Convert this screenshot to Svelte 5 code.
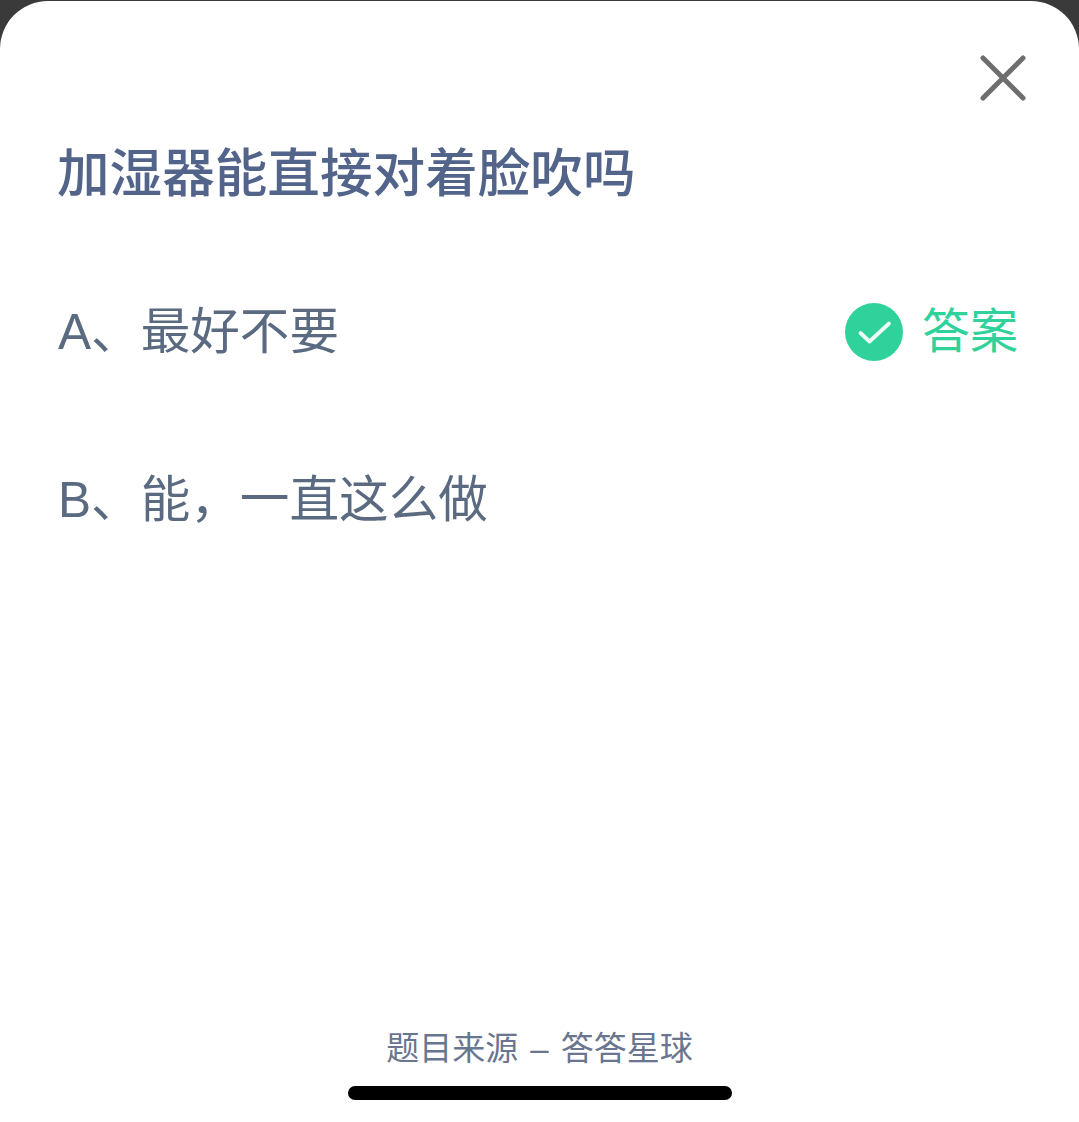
<script>
  const title = "加湿器能直接对着脸吹吗";
  const options = [
    { id: "a", text: "A、最好不要", answer: true },
    { id: "b", text: "B、能，一直这么做", answer: false }
  ];
</script>

<main class="page">
  <div class="sheet">
    <div class="top">
      <svg class="close" width="46" height="46" viewBox="0 0 46 46" aria-label="关闭">
        <path d="M3 3 L43 43 M43 3 L3 43" stroke="#6e6e6e" stroke-width="5" stroke-linecap="round" fill="none" />
      </svg>
    </div>

    <h1>{title}</h1>

    <ul class="options">
      {#each options as opt (opt.id)}
        <li class="option">
          <span class="label">{opt.text}</span>
          {#if opt.answer}
            <span class="answer">
              <svg width="58" height="58" viewBox="0 0 58 58">
                <circle cx="29" cy="29" r="29" fill="#2fd29a" />
                <path d="M15.5 30 L24.5 38.5 L44 20.5" stroke="#fff" stroke-opacity="0.92" stroke-width="3.8" stroke-linecap="round" stroke-linejoin="round" fill="none" />
              </svg>
              <span class="answer-text">答案</span>
            </span>
          {/if}
        </li>
      {/each}
    </ul>

    <footer>
      <p class="source">题目来源 – 答答星球</p>
      <div class="home-bar"></div>
    </footer>
  </div>
</main>

<style>
  :global(body) {
    background: #3a3a3a;
  }

  .page {
    height: 1122px;
    padding-top: 1px;
    box-sizing: border-box;
    overflow: hidden;
    font-family: "Liberation Sans", "Noto Sans CJK SC", sans-serif;
  }

  .sheet {
    height: 1121px;
    background: #fff;
    border-radius: 48px 48px 0 0;
    display: flex;
    flex-direction: column;
    padding: 0 58px;
    box-sizing: border-box;
  }

  .top {
    display: flex;
    justify-content: flex-end;
    padding-top: 54px;
    margin-right: -5px;
    height: 46px;
  }

  h1 {
    margin: 45px 0 0 -1px;
    font-size: 52.6px;
    line-height: 56px;
    font-weight: 500;
    color: #52648a;
  }

  .options {
    list-style: none;
    margin: 0;
    padding: 0;
    margin-top: 100px;
    display: flex;
    flex-direction: column;
    gap: 108px;
  }

  .option {
    display: flex;
    justify-content: space-between;
    align-items: center;
    height: 60px;
  }

  .label {
    font-size: 49.6px;
    line-height: 60px;
    font-weight: 400;
    color: #5a6a80;
  }

  .answer {
    display: flex;
    align-items: center;
    gap: 19px;
    margin-right: 3px;
    font-size: 48px;
    color: #2fd29a;
  }

  .answer-text {
    line-height: 60px;
  }

  footer {
    margin-top: auto;
    display: flex;
    flex-direction: column;
    align-items: center;
    padding-bottom: 22px;
  }

  .source {
    margin: 0 0 17px;
    font-size: 33px;
    line-height: 40px;
    word-spacing: 3px;
    color: #6a7690;
  }

  .home-bar {
    width: 384px;
    height: 14px;
    border-radius: 7px;
    background: #000;
  }
</style>
